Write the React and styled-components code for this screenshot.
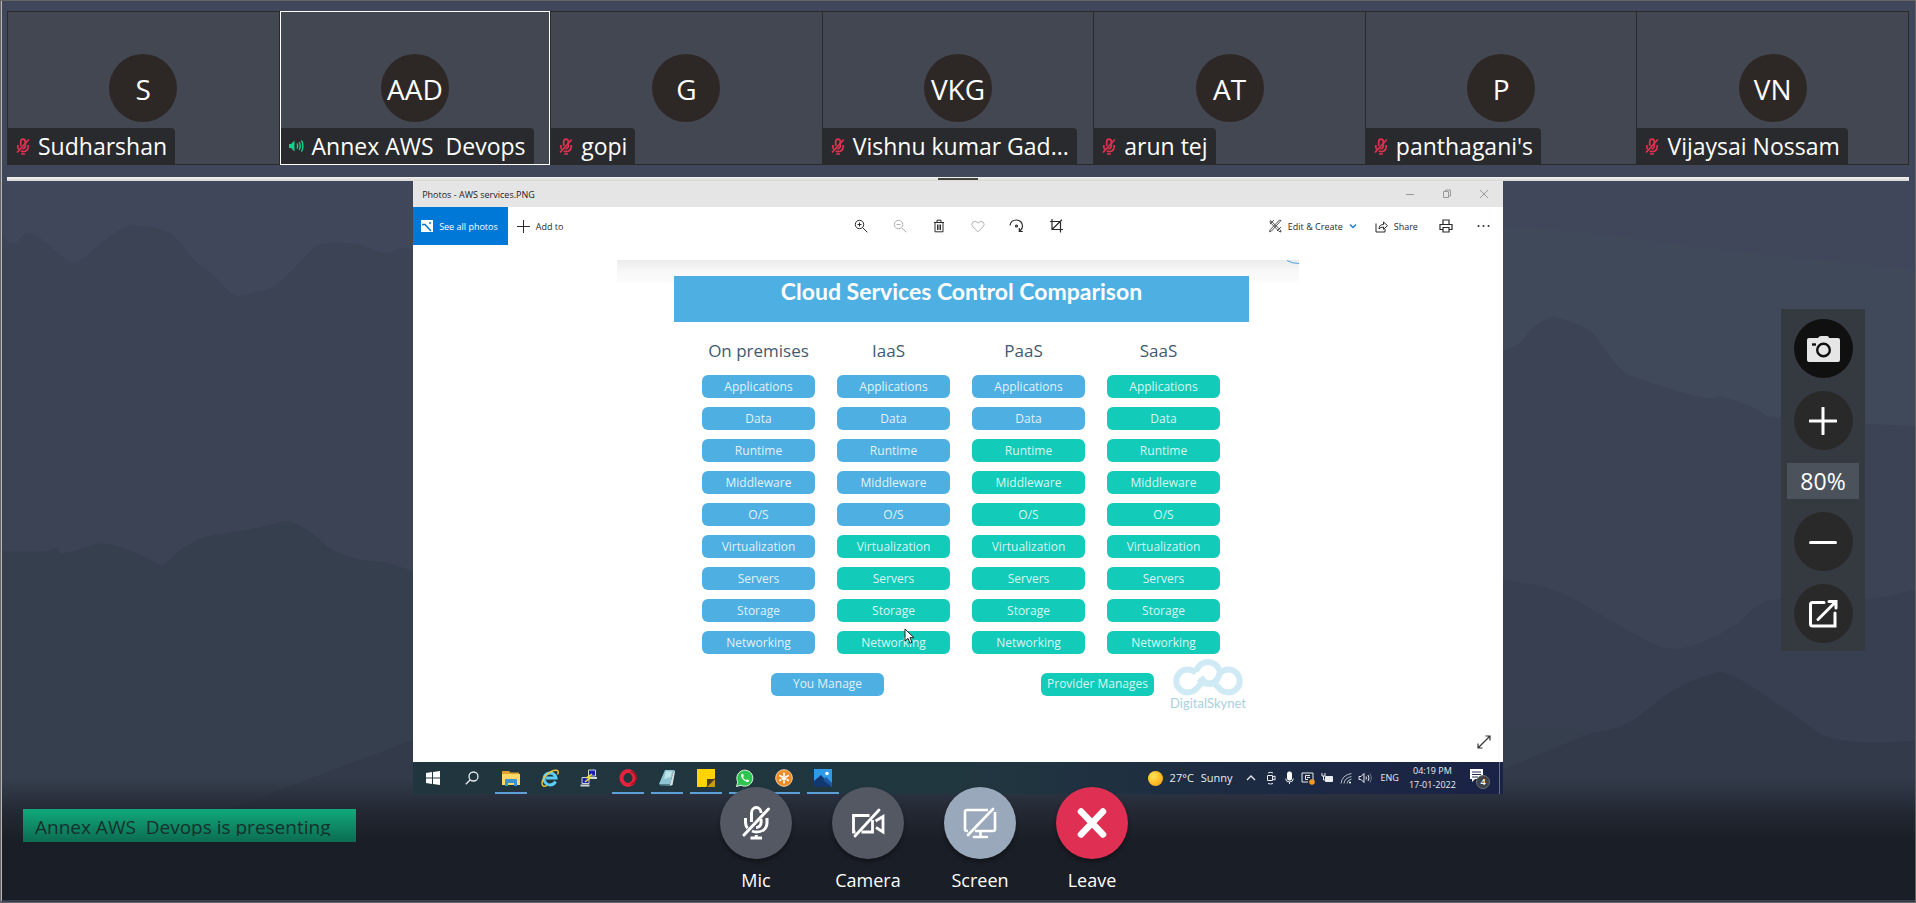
import React from "react";
import styled, { createGlobalStyle, css } from "styled-components";

const GlobalStyle = createGlobalStyle`
  *, *::before, *::after { box-sizing: border-box; }
  html, body { margin: 0; padding: 0; background: #1a1e26; }
  body { font-family: "Open Sans", "Noto Sans", sans-serif; color: #fff; }
  button { font: inherit; color: inherit; background: none; border: 0; padding: 0; margin: 0; cursor: pointer; }
  svg { display: block; flex: none; }
`;

/* ---------- page ---------- */

const Page = styled.div`
  position: relative;
  isolation: isolate;
  display: flex;
  flex-direction: column;
  height: 100vh;
  min-height: 640px;
  border: 1px solid #666462;
  overflow: hidden;
`;

const Backdrop = styled.div`
  position: absolute;
  inset: 0;
  z-index: -1;
  background: #40475a;
  border-left: 1px solid #b4b8be;
  border-bottom: 2px solid #363d4d;

  svg { width: 100%; height: 100%; }

  &::after {
    content: "";
    position: absolute;
    inset: auto 0 0 0;
    height: 122px;
    background: linear-gradient(to bottom, rgba(26, 30, 38, 0), rgba(26, 30, 38, 0.7) 36px, #1a1e26 64px);
  }
`;

/* ---------- participants ---------- */

const Participants = styled.ul`
  list-style: none;
  margin: 10px 6px 12px;
  padding: 0;
  display: grid;
  grid-template-columns: repeat(7, minmax(0, 1fr));
  height: 154px;
  flex: none;
  border: 1px solid #2a2a2b;
  border-left: 0;
`;

const Tile = styled.li`
  position: relative;
  display: flex;
  align-items: center;
  justify-content: center;
  background: #434751;
  border-left: 1px solid #2a2a2b;
  ${(p) => p.$speaking && css`
    &::after {
      content: "";
      position: absolute;
      inset: -1px 0;
      border: 1px solid #fff;
    }
  `}
`;

const Avatar = styled.div`
  width: 68px;
  height: 68px;
  border-radius: 50%;
  background: #2d2826;
  display: flex;
  align-items: center;
  justify-content: center;
  padding-top: 2px;
  font-size: 28px;
  line-height: 32px;
`;

const NameTag = styled.div`
  position: absolute;
  left: 0;
  bottom: 0;
  display: flex;
  align-items: center;
  gap: 8px;
  height: 36px;
  padding: 0 8px;
  border-top-right-radius: 4px;
  background: #292a2d;
  font-size: 23px;
  line-height: 32px;
  white-space: pre;
`;

const Divider = styled.div`
  flex: none;
  display: flex;
  justify-content: center;
  align-items: center;
  height: 4px;
  margin: 0 6px;
  background: linear-gradient(to bottom, #f3f2ee, #d6d6d6);
`;

const Handle = styled.span`
  width: 40px;
  height: 2px;
  background: #45443f;
`;

/* ---------- stage ---------- */

const Stage = styled.main`
  flex: 1;
  min-height: 0;
  display: flex;
`;

const Side = styled.div`
  flex: 1;
  display: flex;
  justify-content: flex-end;
  align-items: center;
  padding: 0 50px 15px 0;
`;

const SharedScreen = styled.section`
  flex: none;
  aspect-ratio: 16 / 9;
  display: flex;
  flex-direction: column;
  background: #fff;
  color: #222;
  overflow: hidden;
`;

const TitleBar = styled.header`
  flex: none;
  display: flex;
  justify-content: space-between;
  align-items: center;
  height: 26px;
  padding-left: 9px;
  background: #e5e5e5;
  font-size: 9px;
`;

const WindowButton = styled.button`
  width: 37px;
  height: 26px;
  display: inline-flex;
  align-items: center;
  justify-content: center;
  color: #999;
`;

const Toolbar = styled.div`
  flex: none;
  display: grid;
  grid-template-columns: 1fr auto 1fr;
  height: 38px;
  font-size: 9px;
`;

const ToolGroup = styled.div`
  display: flex;
  justify-content: ${(p) => (p.$end ? "flex-end" : "flex-start")};
`;

const ToolButton = styled.button`
  display: flex;
  align-items: center;
  justify-content: center;
  gap: 6px;
  min-width: 38px;
  padding: ${(p) => (p.$wide ? "0 9px" : "0")};
  color: ${(p) => (p.$faded ? "#b0b0b0" : "#2b2b2b")};
  white-space: nowrap;
  ${(p) => p.$primary && css`
    background: #0078d7;
    color: #fff;
    padding: 0 10px 0 8px;
  `}
`;

const CenterTools = styled(ToolGroup)`
  ${ToolButton} { width: 39px; }
`;

const Viewer = styled.div`
  position: relative;
  flex: 1;
  min-height: 0;
  padding-top: 15px;
  overflow: hidden;
`;

const Slide = styled.div`
  position: relative;
  width: 682px;
  margin: 0 auto;
  padding: 16px 50px 0 57px;
  background: linear-gradient(to bottom, #ececec, #f8f8f8 12px, #fcfcfc 22px, #fff 24px) no-repeat;
`;

const SlideCurve = styled.svg`
  position: absolute;
  top: 0;
  right: 0;
`;

const Banner = styled.h1`
  margin: 0;
  height: 46px;
  padding-bottom: 16px;
  background: #4eb0e2;
  color: #fff;
  font: 700 23px/30px Lato, sans-serif;
  text-align: center;
`;

const Matrix = styled.table`
  border-collapse: separate;
  border-spacing: 22px 9px;
  table-layout: fixed;
  width: 562px;
  margin-left: 6px;
`;

const ModelHead = styled.th`
  height: 35px;
  padding: 5px 0 0;
  color: #3f5a70;
  font-size: 17px;
  font-weight: 500;
  line-height: 24px;
  white-space: nowrap;
  & + & { padding-right: 10px; }
`;

const pill = css`
  height: 23px;
  padding: 0;
  border-radius: 6px;
  background: ${(p) => (p.$provider ? "#12cbb9" : "#4eb0e2")};
  color: rgba(255, 255, 255, 0.85);
  font-size: 12px;
  line-height: 22px;
  text-align: center;
`;

const LayerCell = styled.td`
  ${pill}
`;

const Legend = styled.div`
  display: flex;
  align-items: center;
  margin-top: -5px;
  padding-left: 97px;
`;

const LegendPill = styled.span`
  ${pill}
  flex: none;
  width: 113px;
  & + & { margin: 0 16px 0 157px; }
`;

const Brand = styled.div`
  width: 76px;
  display: flex;
  flex-direction: column;
  align-items: center;
  color: #a9cfe0;
  font: 400 13px/14px Lato, sans-serif;
`;

const Cursor = styled.svg`
  position: absolute;
  left: 287px;
  top: 368px;
`;

const Expand = styled.button`
  position: absolute;
  right: 12px;
  bottom: 13px;
  color: #333;
`;

/* ---------- taskbar ---------- */

const Taskbar = styled.footer`
  flex: none;
  display: flex;
  justify-content: space-between;
  height: 32px;
  background: linear-gradient(to right, #20353d, #21373f 50%, #1d2b42 75%, #1a2346);
  color: #e8ecef;
`;

const TaskItems = styled.div`
  display: flex;
`;

const TaskButton = styled.button`
  width: 39px;
  display: flex;
  align-items: center;
  justify-content: center;
  ${(p) => p.$open && css`
    background: linear-gradient(#5d9fd6, #5d9fd6) center bottom / 32px 2px no-repeat;
  `}
`;

const Tray = styled.div`
  display: flex;
  align-items: center;
  padding-right: 3px;
  font-size: 9px;
  line-height: 14px;
`;

const Weather = styled.div`
  display: flex;
  align-items: center;
  gap: 7px;
  margin-right: 9px;
  font-size: 11px;
`;

const Sun = styled.span`
  width: 15px;
  height: 15px;
  border-radius: 50%;
  background: radial-gradient(circle at 35% 35%, #ffe25a, #ffc028 50%, #f2921d);
`;

const TrayIcon = styled.span`
  width: 19px;
  display: flex;
  justify-content: center;
`;

const Clock = styled.div`
  margin: 0 13px 0 10px;
  text-align: center;
`;

const Language = styled.span`
  margin-left: 6px;
`;

const PeekEdge = styled.span`
  width: 1px;
  height: 32px;
  margin-left: 9px;
  background: #66708c;
`;

/* ---------- zoom panel ---------- */

const ZoomPanel = styled.aside`
  display: flex;
  flex-direction: column;
  align-items: center;
  gap: 13px;
  width: 84px;
  padding: 10px 6px 8px;
  background: #353a40;
`;

const RoundButton = styled.button`
  width: 59px;
  height: 59px;
  border-radius: 50%;
  background: ${(p) => (p.$dark ? "#101010" : "#292929")};
  display: flex;
  align-items: center;
  justify-content: center;
`;

const ZoomLevel = styled.output`
  width: 72px;
  height: 36px;
  background: #4b525c;
  font-size: 23px;
  line-height: 36px;
  text-align: center;
`;

/* ---------- bottom bar ---------- */

const BottomBar = styled.footer`
  flex: none;
  display: grid;
  grid-template-columns: 1fr auto 1fr;
  align-items: start;
  padding: 0 90px 10px 22px;
`;

const PresentingBadge = styled.div`
  justify-self: start;
  width: 333px;
  height: 33px;
  margin-top: 15px;
  padding: 4px 12px 6px;
  background: linear-gradient(to bottom, #11a97b, #0c6c51);
  color: #14302b;
  font-size: 19px;
  line-height: 28px;
  white-space: pre;
`;

const BadgeText = styled.span`
  display: block;
  height: 23px;
  overflow: hidden;
`;

const Controls = styled.div`
  display: flex;
  gap: 40px;
  margin-top: -7px;
`;

const Control = styled.button`
  width: 72px;
  display: flex;
  flex-direction: column;
  align-items: center;
  gap: 9px;
  font-size: 18px;
  line-height: 24px;
`;

const ControlDisc = styled.span`
  width: 72px;
  height: 72px;
  border-radius: 50%;
  background: ${(p) => p.$color};
  box-shadow: 0 3px 4px rgba(0, 0, 0, 0.35);
  display: flex;
  align-items: center;
  justify-content: center;
`;

/* ---------- icons ---------- */

const Icon = ({ w = 14, h = w, box = `0 0 ${w} ${h}`, stroke = 1, children }) => (
  <svg width={w} height={h} viewBox={box} fill="none" stroke="currentColor" strokeWidth={stroke} aria-hidden="true">
    {children}
  </svg>
);

const MutedGlyph = () => (
  <Icon w={14} h={17} stroke={1.7}>
    <g stroke="#e03151">
      <path d="M4.7 8V4a2.3 2.8 0 0 1 4.6 0v4.2a2.3 2.6 0 0 1-3 2.2" />
      <path d="M1.8 7v1.6q0 1.6 1 2.8M12.2 7v1.6c0 3-2 5-5.2 5q-1.2 0-2.3-.5" />
      <path d="M1 14.5 12.8 1.5M5 16h4" />
    </g>
  </Icon>
);

const SpeakingGlyph = () => (
  <Icon w={16} h={14} stroke={1.4}>
    <path d="M1 5h2l3.5-3.4v10.8L3 9H1z" fill="#10d18c" stroke="none" />
    <path d="M9 4.5q1.3 2.5 0 5M11.2 3q2 4 0 8M13.4 1.4q3 5.600 0 11.200" stroke="#10d18c" />
  </Icon>
);

const MicOff = () => (
  <Icon w={28} h={34} stroke={3}>
    <path d="M9.500 16V7a4.800 5.400 0 0 1 9.600 0M19.100 13v3.500a4.800 5 0 0 1-5 5" />
    <path d="M3.500 12v4.500q0 3.300 2 5.800M25 12v4.500c0 6-4.500 9.500-10.700 9.500q-2.300 0-4.300-1" />
    <path d="M8.500 32h11.500M14.300 29v3" />
    <path d="M2 29 26.500 3" strokeLinecap="round" />
  </Icon>
);

const CameraOff = () => (
  <Icon w={34} h={30} stroke={2.8}>
    <path d="M18.500 7.500H2.500v16.500h2M10.500 24h11V12" />
    <path d="M24.500 13 32 8.500V24l-7-4.500" />
    <path d="M4 28 28 2" strokeLinecap="round" />
  </Icon>
);

const ScreenOff = () => (
  <Icon w={34} h={32} stroke={2.6}>
    <path d="M25 3H4Q2 3 2 5v17q0 2 2 2h1M12 24h18q2 0 2-2V5" />
    <path d="M11 30h13M17.500 25v5" strokeLinecap="round" />
    <path d="M5 28 30 2" strokeLinecap="round" />
  </Icon>
);

const Close = () => (
  <Icon w={30} h={32} stroke={6.500}>
    <path d="M4 4.500 26 27.500M26 4.500 4 27.500" strokeLinecap="round" />
  </Icon>
);

const Magnifier = ({ plus }) => (
  <Icon w={14}>
    <circle cx="5.500" cy="5.500" r="4.200" />
    <path d={plus ? "M8.700 8.700 13.300 13.300M3.500 5.500h4M5.500 3.500v4" : "M8.700 8.700 13.300 13.300M3.500 5.500h4"} />
  </Icon>
);

/* ---------- data ---------- */

const people = [
  ["S", "Sudharshan"],
  ["AAD", "Annex AWS  Devops", true],
  ["G", "gopi"],
  ["VKG", "Vishnu kumar Gad..."],
  ["AT", "arun tej"],
  ["P", "panthagani's"],
  ["VN", "Vijaysai Nossam"],
];

const models = ["On premises", "IaaS", "PaaS", "SaaS"];

/* Each layer carries the index of the first model in which the provider runs it. */
const layers = [
  ["Applications", 3],
  ["Data", 3],
  ["Runtime", 2],
  ["Middleware", 2],
  ["O/S", 2],
  ["Virtualization", 1],
  ["Servers", 1],
  ["Storage", 1],
  ["Networking", 1],
];

const controls = [
  ["Mic", "#535863", MicOff],
  ["Camera", "#535863", CameraOff],
  ["Screen", "#9aa8bc", ScreenOff],
  ["Leave", "#df2f52", Close],
];

const tasks = [
  ["Start", false, (
    <Icon w={14}><path d="M0 2l6-.9v5.500H0zM7 1l7-1v6.600H7zM0 7.500h6V13l-6-.9zM7 7.500h7V14l-7-1z" fill="#fff" stroke="none" /></Icon>
  )],
  ["Search", false, (
    <Icon w={14} stroke={1.300}><circle cx="8.500" cy="5.500" r="4.500" /><path d="M5.300 8.700.8 13.200" /></Icon>
  )],
  ["File Explorer", true, (
    <Icon w={18}><g stroke="none">
      <path d="M0 2h7l1.500 1.500H17V8H0z" fill="#e0a030" /><path d="M0 5h18v11H0z" fill="#ffd868" />
      <path d="M3 17v-6q0-1 1-1h10q1 0 1 1v6h-3v-3H6v3z" fill="#3f90d6" />
    </g></Icon>
  )],
  ["Internet Explorer", false, (
    <Icon w={18}>
      <path d="M14.500 12.500A6 6 0 1 1 15 9H5" stroke="#5ccdf6" strokeWidth="3" />
      <path d="M2 17Q-1 13 5 6.500 12 0 16.500 1.500q1.500 1.500 0 4M2 17q1.500.8 4-.7" stroke="#f2c53d" strokeWidth="1.400" />
    </Icon>
  )],
  ["PuTTY", false, (
    <Icon w={18}>
      <g stroke="#cfd3da"><path d="M8.500 1h7v6h-7zM2 8.500h7v6H2z" fill="#1b1fae" /><path d="M9 9h8M.5 16.500h9" strokeWidth="2" /></g>
      <path d="M12 5 7 8.500l3 .5-5 4" stroke="#f4e52f" strokeWidth="1.500" />
    </Icon>
  )],
  ["Opera", true, (
    <Icon w={18}><ellipse cx="9" cy="9" rx="6.500" ry="7" stroke="#e3243b" strokeWidth="4" /><path d="M12 2.500q5 2 5 6.500t-5 6.500" stroke="#a80f24" strokeWidth="1.500" /></Icon>
  )],
  ["Notepad", true, (
    <Icon w={18}><g stroke="none">
      <path d="M7 1h9l-4 14H1z" fill="#8fc6d3" /><path d="M16 1l1 1.500L14.500 16l-3 1z" fill="#d9e2e3" />
      <path d="M1 15h11l-.5 2L2 16.500z" fill="#54838f" /><path d="M8 2.500h6L12.500 8 6 10z" fill="#bfe4ea" />
    </g></Icon>
  )],
  ["Sticky Notes", true, (
    <Icon w={18}><g stroke="none"><path d="M0 0h18v9l-9 9H0z" fill="#ffd400" /><path d="M10 10h8l-8 8z" fill="#4a3c1d" /><path d="M18 10v8h-8z" fill="#c79a12" /></g></Icon>
  )],
  ["WhatsApp", true, (
    <Icon w={18}>
      <path d="M.5 17.500l1.300-4.500A8 8 0 1 1 5 16.200z" fill="#2cc64f" stroke="#dff5e4" />
      <path d="M6 4.800q-1.500 1-.6 3.200 1.800 3.900 5.400 5.100 2 .3 2.600-1.600L11 10.200l-1.200 1.100Q8 10.300 7 8.300l.8-1.200L7 4.700z" fill="#fff" stroke="none" />
    </Icon>
  )],
  ["Meetings", true, (
    <Icon w={18}>
      <circle cx="9" cy="9" r="8.300" fill="#f08a24" stroke="#f9d3a6" />
      <path d="M9 3.500v11M4.200 6.200l9.600 5.600M13.800 6.200l-9.600 5.600" stroke="#fff" strokeWidth="1.700" strokeDasharray="3.500 .8" />
      <circle cx="9" cy="9" r="2" stroke="#fff" />
    </Icon>
  )],
  ["Photos", true, (
    <Icon w={18}><g stroke="none"><path d="M0 0h18v18H0z" fill="#2f9be8" /><path d="M0 12l7-6 11 12H0z" fill="#12386e" /><path d="M9 11l3-3 6 6v4z" fill="#1d57a0" /><circle cx="13" cy="4.500" r="1.800" fill="#fff" /></g></Icon>
  )],
];

const trayIcons = [
  <Icon w={10}><path d="M1 7l4-4 4 4" stroke="currentColor" strokeWidth="1.300" /></Icon>,
  <Icon w={11} h={14}><path d="M2.500 4.500h5v5h-5zM7.500 6l2.500-1v4l-2.500-1M3 2q2.500-1.500 5 0M3 12.500q2.500 1 5 0" /></Icon>,
  <Icon w={9} h={14}><rect x="2.500" y="1" width="4" height="8" rx="1.500" fill="#fff" stroke="#fff" /><path d="M.7 7.500q0 3.500 3.800 3.500t3.800-3.500M4.500 11v2" /></Icon>,
  <Icon w={14} h={14}><path d="M1 2h11v7M1 2v9h6M9 4.500H4.500v4H7M9 6.500H6" /><circle cx="11" cy="11" r="2.800" fill="#f59a23" stroke="none" /></Icon>,
  <Icon w={13} h={12}><path d="M4.500 4.500h7v5h-7z" fill="#e8ecef" /><path d="M1 1v3h3V1M2.500 4v4H4" /></Icon>,
  <Icon w={12}><path d="M1 11.500Q2 3 11.500 1.500M4 11.500q.5-5.500 7.500-7M7 11.500q.3-3.500 4.500-4.500" opacity=".75" /><circle cx="10" cy="10.500" r="1" fill="#fff" stroke="none" /></Icon>,
  <Icon w={14} h={12}><path d="M1 4.500h2l3-3v9l-3-3H1z" /><path d="M8 4.500q1 1.500 0 3M10 3q2 3 0 6" /><path d="M12 1.500q3 4.500 0 9" opacity=".4" /></Icon>,
];

function Mountains() {
  return (
    <Backdrop>
      <svg viewBox="0 0 1916 903" preserveAspectRatio="none" aria-hidden="true">
        <path fill="#3f495a" d="M1300 205 1503 226 1580 231 1700 247 1916 270V903H1300Z" />
        <path fill="#3c4355" d="M0 234Q10 250 17 240T30 233C44 239 62 263 72 263S112 226 132 225Q156 227 168 233C180 240 188 260 202 268S226 294 235 296 248 292 262 291 300 260 310 250 335 243 348 243 372 252 383 253 390 245 413 250L1400 340 1503 351Q1518 349 1526 337T1552 317Q1580 323 1594 334C1604 346 1618 372 1632 377S1695 398 1708 399 1715 395 1728 399 1758 408 1768 417Q1830 423 1916 427V903H0Z" />
        <path fill="#383f51" d="M1400 570 1503 581Q1540 586 1560 594C1600 612 1650 651 1673 651S1733 632 1746 618 1770 601 1790 600Q1850 610 1916 591V903H1400Z" />
        <path fill="#363f4e" d="M0 553H40Q48 553 52 550T57 555C70 555 90 545 100 545Q125 547 160 568 186 543 205 538C225 534 260 530 283 522Q300 524 320 543T385 564L413 573 1000 700 1503 729 1580 733H1610Q1620 733 1640 718T1720 674Q1730 673 1765 697T1820 735 1916 743V903H0Z" />
        <path fill="#333b4b" d="M20 898Q200 820 413 742L900 670 1503 772 1590 736 1610 732Q1630 728 1655 706T1720 674Q1730 673 1765 697T1820 735 1916 743V903H20Z" />
      </svg>
    </Backdrop>
  );
}

function PhotosWindow() {
  return (
    <SharedScreen>
      <TitleBar>
        <span>Photos - AWS services.PNG</span>
        <div>
          <WindowButton aria-label="Minimize"><Icon w={10}><path d="M1 5.500h8" /></Icon></WindowButton>
          <WindowButton aria-label="Restore"><Icon w={10}><path d="M1.500 2.500h5v6h-5zM3.500 2.500v-1.500h5v6H7" /></Icon></WindowButton>
          <WindowButton aria-label="Close"><Icon w={10}><path d="M1 1l8 8M9 1 1 9" /></Icon></WindowButton>
        </div>
      </TitleBar>

      <Toolbar>
        <ToolGroup>
          <ToolButton $primary>
            <Icon w={12}><path d="M0 0h12v12H0z" fill="#fff" stroke="none" /><path d="M1 4.500l3 0 6 6.500" stroke="#0078d7" strokeWidth="1.500" /><circle cx="9" cy="3" r="1" fill="#0078d7" stroke="none" /></Icon>
            See all photos
          </ToolButton>
          <ToolButton $wide>
            <Icon w={13}><path d="M6.500 0v13M0 6.500h13" /></Icon>
            Add to
          </ToolButton>
        </ToolGroup>
        <CenterTools>
          <ToolButton aria-label="Zoom in"><Magnifier plus /></ToolButton>
          <ToolButton aria-label="Zoom out" $faded><Magnifier /></ToolButton>
          <ToolButton aria-label="Delete"><Icon w={12} h={14}><path d="M1 3.500h10M4 3V1.200h4V3M2 3.500v9.300h8V3.500M4.500 5.500v5.500M6 5.500v5.500M7.500 5.500v5.500" /></Icon></ToolButton>
          <ToolButton aria-label="Favorite" $faded><Icon w={14} h={13}><path d="M7 11.800 1.700 6.500Q.1 4.500 1.500 2.400 4.300-.2 7 3q2.700-3.200 5.500-.6 1.400 2.100-.2 4.100z" /></Icon></ToolButton>
          <ToolButton aria-label="Rotate"><Icon w={15} h={14} stroke={1.200}><path d="M1 6.500C1.500 3 4 1 7.500 1s6 2.600 6 6q0 3-2.500 5M10.300 9v3.500h3.500" /><circle cx="7.500" cy="7" r="1" /></Icon></ToolButton>
          <ToolButton aria-label="Crop"><Icon w={14} h={14} stroke={1.200}><path d="M3 0v10.500h8.500V2.500H1M3 10.500 13 .8M11.500 10.500H14M11.500 10v3.500" /></Icon></ToolButton>
        </CenterTools>
        <ToolGroup $end>
          <ToolButton $wide>
            <Icon w={13} h={14}><path d="M1.500 1.500l10 9.500.5 2-2-.6L.8 3zM12 1.500 2.500 12l-2 .8.600-2L10.500 1zM1 5 5 1M8 12l4-4" strokeWidth=".8" /></Icon>
            Edit &amp; Create
            <Icon w={8}><path d="M1 2.500l3 3 3-3" stroke="#1f7fd6" strokeWidth="1.500" /></Icon>
          </ToolButton>
          <ToolButton $wide>
            <Icon w={13} h={13}><path d="M1 3.500v8.500h9V9M4 9q0-4.500 4.500-4.500V2l4 3.700-4 3.600V7Q5.500 7 4 9z" /></Icon>
            Share
          </ToolButton>
          <ToolButton aria-label="Print"><Icon w={14} h={14} stroke={1.200}><path d="M4 5V1h6v4M4 10.500H1V5.500h12v5h-3M4 8.500h6V13H4z" /></Icon></ToolButton>
          <ToolButton aria-label="See more"><Icon w={13} h={4}><g fill="currentColor" stroke="none"><circle cx="1.500" cy="2" r="1" /><circle cx="6.500" cy="2" r="1" /><circle cx="11.500" cy="2" r="1" /></g></Icon></ToolButton>
        </ToolGroup>
      </Toolbar>

      <Viewer>
        <Slide>
          <SlideCurve width="12" height="5" viewBox="0 0 12 5" fill="none" stroke="#4aa3d8"><path d="M0 .5Q5 3.500 12 3.500" /></SlideCurve>
          <Banner>Cloud Services Control Comparison</Banner>
          <Matrix>
            <thead>
              <tr>{models.map((m) => <ModelHead key={m} scope="col">{m}</ModelHead>)}</tr>
            </thead>
            <tbody>
              {layers.map(([name, from]) => (
                <tr key={name}>
                  {models.map((m, i) => <LayerCell key={m} $provider={i >= from}>{name}</LayerCell>)}
                </tr>
              ))}
            </tbody>
          </Matrix>
          <Legend>
            <LegendPill>You Manage</LegendPill>
            <LegendPill $provider>Provider Manages</LegendPill>
            <Brand>
              <svg width="74" height="38" viewBox="0 0 74 38" fill="none" stroke="#cfeaf5" strokeWidth="6">
                <path d="M25 15a11.500 11.500 0 1 0 0 16q3-2.500 5-6" />
                <path d="M49 15a11.500 11.500 0 1 1 0 16Q43 24 40 25.500q-6 1-10-6.500" />
                <path d="M25 13Q29 4 37 4t12 9q-2 13-12 13-5 0-9-5" />
              </svg>
              DigitalSkynet
            </Brand>
          </Legend>
          <Cursor width="12" height="17" viewBox="0 0 12 17" fill="#fff" stroke="#222"><path d="M1 1v12l3-2.600 2 4.800 2-.9-2-4.600h4z" /></Cursor>
        </Slide>
        <Expand aria-label="Full screen"><Icon w={14} h={14} stroke={1.200}><path d="M1 13 13 1M8.500 1H13v4.500M1 8.500V13h4.500" /></Icon></Expand>
      </Viewer>

      <Taskbar>
        <TaskItems>
          {tasks.map(([name, open, icon]) => <TaskButton key={name} aria-label={name} $open={open}>{icon}</TaskButton>)}
        </TaskItems>
        <Tray>
          <Weather><Sun /><span>27°C</span><span>Sunny</span></Weather>
          {trayIcons.map((icon, i) => <TrayIcon key={i}>{icon}</TrayIcon>)}
          <Language>ENG</Language>
          <Clock><div>04:19 PM</div><div>17-01-2022</div></Clock>
          <Icon w={21} h={22}>
            <path d="M1 2h13v10H6l-3 3v-3H1z" fill="#fff" stroke="none" />
            <path d="M3 5h9M3 7.500h9M3 10h6" stroke="#25304c" />
            <circle cx="14" cy="15" r="6.500" fill="#3c4248" stroke="#6b7078" />
            <text x="14" y="18" fill="#fff" stroke="none" fontSize="9" fontWeight="600" textAnchor="middle">4</text>
          </Icon>
          <PeekEdge />
        </Tray>
      </Taskbar>
    </SharedScreen>
  );
}

export default function App() {
  return (
    <>
      <GlobalStyle />
      <Page>
        <Mountains />
        <Participants>
          {people.map(([initials, name, speaking]) => (
            <Tile key={name} $speaking={speaking}>
              <Avatar>{initials}</Avatar>
              <NameTag>
                {speaking ? <SpeakingGlyph /> : <MutedGlyph />}
                {name}
              </NameTag>
            </Tile>
          ))}
        </Participants>
        <Divider><Handle /></Divider>

        <Stage>
          <Side />
          <PhotosWindow />
          <Side>
            <ZoomPanel>
              <RoundButton $dark aria-label="Take snapshot">
                <Icon w={33} h={26}>
                  <path d="M2 2h9q1-2 3-2h6q2 0 2 2h9q2 0 2 2v20q0 2-2 2H2q-2 0-2-2V4q0-2 2-2z" fill="#e6e6e6" stroke="none" />
                  <circle cx="16.500" cy="14" r="6.300" stroke="#101010" strokeWidth="2.400" />
                  <path d="M5 8.500h4" stroke="#101010" strokeWidth="2.400" />
                </Icon>
              </RoundButton>
              <RoundButton aria-label="Zoom in"><Icon w={28} stroke={3}><path d="M14 1v26M1 14h26" strokeLinecap="round" /></Icon></RoundButton>
              <ZoomLevel>80%</ZoomLevel>
              <RoundButton aria-label="Zoom out"><Icon w={28} stroke={3}><path d="M1.500 14.500h25" strokeLinecap="round" /></Icon></RoundButton>
              <RoundButton aria-label="Open in new window">
                <Icon w={30} stroke={3}>
                  <path d="M16 3.500H4.500q-2 0-2 2V25q0 2 2 2H27V14" strokeLinecap="round" />
                  <path d="M10 20.500 27 3.500M21 2.500h7V9" strokeLinecap="round" />
                </Icon>
              </RoundButton>
            </ZoomPanel>
          </Side>
        </Stage>

        <BottomBar>
          <PresentingBadge role="status"><BadgeText>Annex AWS  Devops is presenting</BadgeText></PresentingBadge>
          <Controls>
            {controls.map(([label, color, Glyph]) => (
              <Control key={label}>
                <ControlDisc $color={color}><Glyph /></ControlDisc>
                {label}
              </Control>
            ))}
          </Controls>
        </BottomBar>
      </Page>
    </>
  );
}
